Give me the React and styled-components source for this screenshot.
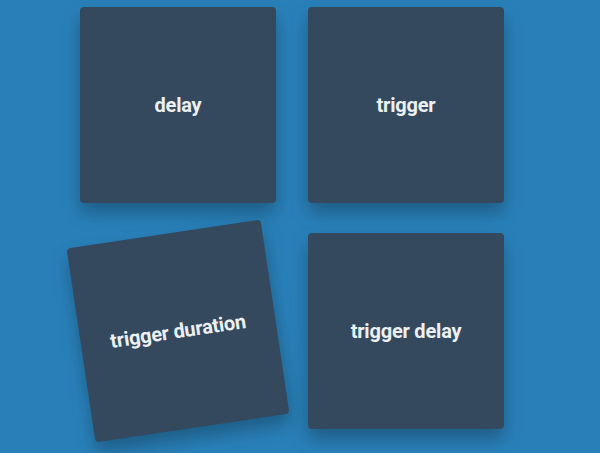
import React from "react";
import styled, { createGlobalStyle } from "styled-components";

const Global = createGlobalStyle`
  html, body { margin: 0; padding: 0; }
  body {
    background: #2980b9;
    font-family: Roboto, "Liberation Sans", sans-serif;
    width: 600px;
    height: 453px;
    overflow: hidden;
  }
`;

const Grid = styled.div`
  display: grid;
  grid-template-columns: repeat(2, 196px);
  grid-auto-rows: 196px;
  column-gap: 32px;
  row-gap: 30px;
  padding: 7px 0 0 80px;
`;

const Card = styled.div`
  display: flex;
  align-items: center;
  justify-content: center;
  background: #34495e;
  color: #ecf0f1;
  border-radius: 4px;
  font-size: 20px;
  font-weight: 700;
  letter-spacing: -0.2px;
  box-shadow: 0 10px 18px rgba(0, 0, 0, 0.28);
  transform: rotate(${(p) => p.$tilt || 0}deg);
`;

export default function App() {
  return (
    <>
      <Global />
      <Grid>
        <Card>delay</Card>
        <Card>trigger</Card>
        <Card $tilt={-8.5}>trigger duration</Card>
        <Card>trigger delay</Card>
      </Grid>
    </>
  );
}
